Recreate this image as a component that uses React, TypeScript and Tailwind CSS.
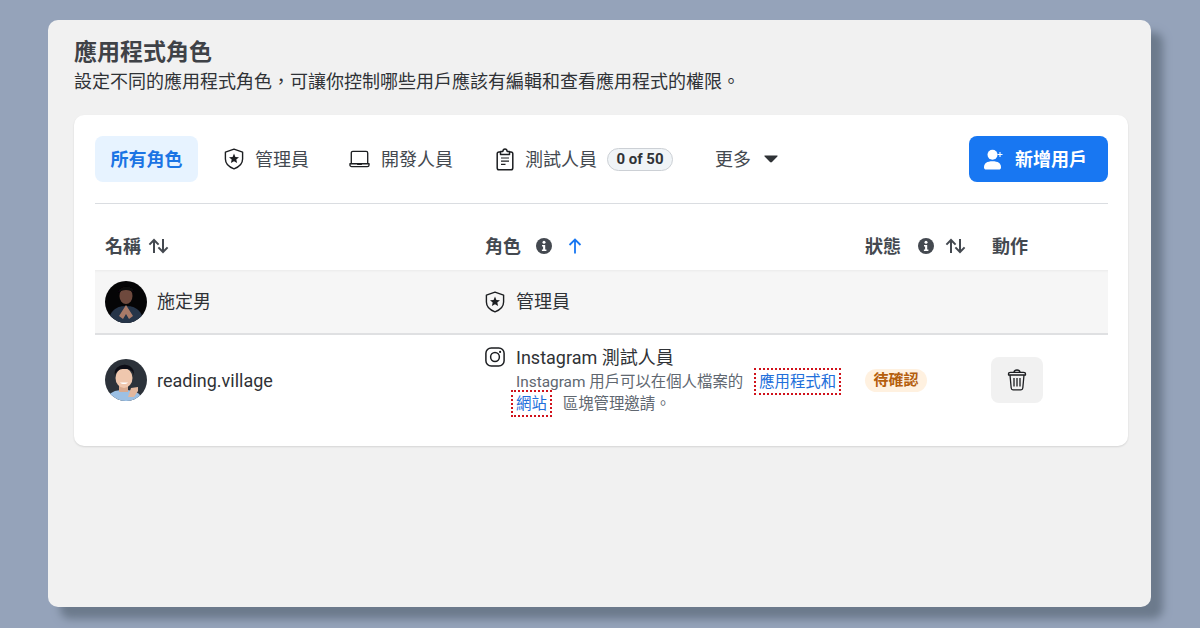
import React from "react";

const ShieldStar = () => (
  <svg width="20" height="22" viewBox="0 0 20 22" fill="none">
    <path d="M10 1.2 L18.6 4.1 V11 C18.6 15.8 14.8 19.1 10 20.8 C5.2 19.1 1.4 15.8 1.4 11 V4.1 Z" stroke="#1c1e21" strokeWidth="1.4" strokeLinejoin="round" />
    <path d="M10 5.6 L11.4 9 L15 9.3 L12.3 11.6 L13.1 15.1 L10 13.2 L6.9 15.1 L7.7 11.6 L5 9.3 L8.6 9 Z" fill="#1c1e21" />
  </svg>
);

const Laptop = () => (
  <svg width="21" height="18" viewBox="0 0 22 18" fill="none" stroke="#1c1e21" strokeWidth="1.4" strokeLinejoin="round">
    <path d="M2.4 14 V2.6 C2.4 1.7 3.1 1 4 1 H18 C18.9 1 19.6 1.7 19.6 2.6 V14" />
    <path d="M1 14 H21 V15.2 C21 16.2 20.2 17 19.2 17 H2.8 C1.8 17 1 16.2 1 15.2 Z" />
    <path d="M8.5 14.6 H13.5" />
  </svg>
);

const Clipboard = () => (
  <svg width="18" height="23" viewBox="0 0 18 23" fill="none" stroke="#1c1e21" strokeWidth="1.5" strokeLinejoin="round">
    <path d="M4.5 4 H3 C2 4 1.2 4.8 1.2 5.8 V20 C1.2 21 2 21.8 3 21.8 H15 C16 21.8 16.8 21 16.8 20 V5.8 C16.8 4.8 16 4 15 4 H13.5" />
    <path d="M4.5 6.5 V3.5 H6.8 C7 2 7.9 1.1 9 1.1 C10.1 1.1 11 2 11.2 3.5 H13.5 V6.5 Z" />
    <path d="M5 10 H13 M5 13.2 H13 M5 16.4 H9.5" strokeWidth="1.2" />
  </svg>
);

const SortBoth = () => (
  <svg width="21" height="16" viewBox="0 0 21 16" fill="none" stroke="#444950" strokeWidth="2">
    <path d="M6 15 V2 M1.4 6.6 L6 2 L10.6 6.6" />
    <path d="M15 1 V14 M10.4 9.4 L15 14 L19.6 9.4" />
  </svg>
);

const ArrowUp = () => (
  <svg width="14" height="16" viewBox="0 0 14 16" fill="none" stroke="#1877f2" strokeWidth="1.8">
    <path d="M7 15.5 V1.5 M1.5 7 L7 1.5 L12.5 7" />
  </svg>
);

const InfoDot = () => (
  <svg width="16" height="16" viewBox="0 0 16 16">
    <circle cx="8" cy="8" r="8" fill="#444950" />
    <circle cx="8" cy="4.2" r="1.5" fill="#fff" />
    <path d="M6 7 H9.2 V11.4 H10.4 V13 H5.9 V11.4 H7.1 V8.6 H6 Z" fill="#fff" />
  </svg>
);

const Instagram = () => (
  <svg width="20" height="20" viewBox="0 0 20 20" fill="none" stroke="#1c1e21" strokeWidth="1.5">
    <rect x="0.9" y="0.9" width="18.2" height="18.2" rx="5.4" />
    <circle cx="10" cy="10" r="4.4" />
    <circle cx="15.1" cy="4.9" r="1.1" fill="#1c1e21" stroke="none" />
  </svg>
);

const Trash = () => (
  <svg width="20" height="22" viewBox="0 0 20 22" fill="none" stroke="#1c1e21" strokeWidth="1.3" strokeLinejoin="round">
    <path d="M1.5 5 C1.5 3.8 2.4 3.3 3.5 3.3 H16.5 C17.6 3.3 18.5 3.8 18.5 5 V6 H1.5 Z" />
    <path d="M7 3.2 C7.2 1.8 8 1 10 1 C12 1 12.8 1.8 13 3.2" />
    <path d="M3 6 L4.2 19 C4.3 20.2 5 20.8 6 20.8 H14 C15 20.8 15.7 20.2 15.8 19 L17 6" />
    <path d="M7 9 V17.5 M10 9 V17.5 M13 9 V17.5" />
  </svg>
);

const AddUser = () => (
  <svg width="20" height="21" viewBox="0 0 20 21" fill="#fff">
    <circle cx="8.5" cy="5.8" r="5" />
    <path d="M0 18.2 C0 14.2 3 12.2 8.5 12.2 C14 12.2 17 14.2 17 18.2 C17 19.7 16.2 20.5 14.8 20.5 H2.2 C0.8 20.5 0 19.7 0 18.2 Z" />
    <path d="M16 3 V8 M13.5 5.5 H18.5" stroke="#fff" strokeWidth="1.1" fill="none" />
  </svg>
);

// small blurred stand-ins for the two profile photos
const AvatarDark = () => (
  <svg width="42" height="42" viewBox="0 0 42 42" className="rounded-full shrink-0">
    <defs>
      <filter id="soft-a"><feGaussianBlur stdDeviation="0.6" /></filter>
    </defs>
    <rect width="42" height="42" fill="#050506" />
    <g filter="url(#soft-a)">
      <path d="M3 42 C5 28 13 25 21 25 C29 25 37 28 39 42 Z" fill="#25344a" />
      <ellipse cx="21" cy="15" rx="6.5" ry="8" fill="#6e4a3e" />
      <path d="M13 12 C13 4 29 3 29 12 C25 8 17 8 13 12 Z" fill="#0a0809" />
      <path d="M21 24 L14 35 L18 38 L21 33 L24 38 L28 35 Z" fill="#a87a68" />
    </g>
  </svg>
);

const AvatarLight = () => (
  <svg width="42" height="42" viewBox="0 0 42 42" className="rounded-full shrink-0">
    <defs>
      <filter id="soft-b"><feGaussianBlur stdDeviation="0.7" /></filter>
    </defs>
    <rect width="42" height="42" fill="#2c323a" />
    <g filter="url(#soft-b)">
      <path d="M2 42 C3 33 10 31 19 31 C28 31 36 33 38 42 Z" fill="#9cc0e4" />
      <rect x="14" y="25" width="9" height="8" fill="#d8aa90" />
      <ellipse cx="19" cy="19" rx="8.5" ry="10" fill="#efc7ae" />
      <path d="M10 16 C7 4 30 1 29 16 C27 10 23 10 19 10 C15 10 12 11 10 16 Z" fill="#101116" />
      <path d="M15 23.5 C17 25.5 21 25.5 23 23.5 Z" fill="#fff" />
      <path d="M23 38 L26 29 L33 28 L33 32 L29 38 Z" fill="#e3b79d" />
    </g>
  </svg>
);

const Tab = ({ icon, label }: { icon: React.ReactNode; label: string }) => (
  <div className="flex items-center gap-[11px] text-[#444950]">
    {icon}
    <span>{label}</span>
  </div>
);

export default function App() {
  return (
    <div className="w-[1200px] h-[628px] overflow-hidden bg-[#95a3ba] pt-5 pl-12 font-['Roboto','Noto_Sans_CJK_TC',sans-serif] text-[18px] text-[#444950]">
      <div className="w-[1103px] h-[587px] rounded-[10px] bg-[#f1f1f1] px-[26px] pt-[18px] shadow-[12px_12px_8px_#6c7a8c]">
        <h1 className="text-[23px] leading-[30px] font-bold text-[#3f4247]">應用程式角色</h1>
        <p className="text-[18px] leading-[28px] text-[#2f3236]">設定不同的應用程式角色，可讓你控制哪些用戶應該有編輯和查看應用程式的權限。</p>

        <div className="mt-[19px] w-[1054px] h-[331px] rounded-[10px] bg-white pl-[21px] pr-[20px] pt-[21px] shadow-[0_1px_2px_rgba(0,0,0,0.12)]">
          <div className="flex items-center h-[46px]">
            <div className="flex items-center h-[46px] w-[103px] justify-center rounded-lg bg-[#e7f3ff] text-[#1b74e4] font-bold">所有角色</div>
            <div className="ml-[26px]"><Tab icon={<ShieldStar />} label="管理員" /></div>
            <div className="ml-[40px]"><Tab icon={<Laptop />} label="開發人員" /></div>
            <div className="ml-[43px] flex items-center">
              <Tab icon={<Clipboard />} label="測試人員" />
              <span className="ml-[10px] h-[23px] w-[66px] flex items-center justify-center rounded-full border border-[#ccd0d5] bg-[#f0f4f7] text-[15px] font-bold text-[#2f3236]">0 of 50</span>
            </div>
            <div className="ml-[42px] flex items-center gap-[13px]">
              <span>更多</span>
              <svg width="14" height="8" viewBox="0 0 14 8"><path d="M1 0.5 H13 C13.6 0.5 13.8 1.1 13.4 1.5 L8 7 C7.4 7.6 6.6 7.6 6 7 L0.6 1.5 C0.2 1.1 0.4 0.5 1 0.5 Z" fill="#2f3236" /></svg>
            </div>
            <button className="ml-auto flex h-[46px] w-[139px] items-center gap-[11px] rounded-lg bg-[#1877f2] pl-[15px] font-bold text-white">
              <AddUser />
              <span>新增用戶</span>
            </button>
          </div>

          <div className="mt-[21px] border-t border-[#dadde1]" />

          <div className="grid h-[66px] grid-cols-[380px_380px_127px_1fr] items-center pt-[18px] font-bold text-[#444950]">
            <div className="flex items-center gap-[7px] pl-[10px]">名稱 <SortBoth /></div>
            <div className="flex items-center gap-[15px] pl-[10px]">角色 <InfoDot /><span className="ml-[1px]"><ArrowUp /></span></div>
            <div className="flex items-center pl-[10px]">狀態<span className="ml-[17px]"><InfoDot /></span><span className="ml-[11px]"><SortBoth /></span></div>
            <div className="pl-[10px]">動作</div>
          </div>

          <div className="grid h-[65px] grid-cols-[380px_380px_127px_1fr] items-center border-b-2 border-[#dfe0e2] bg-[#f6f6f6] shadow-[inset_0_3px_3px_-2px_rgba(0,0,0,0.05)]">
            <div className="flex items-center gap-[10px] pl-[10px] text-[#2f3236]"><AvatarDark /><span>施定男</span></div>
            <div className="flex items-center gap-[11px] pl-[10px] text-[#2f3236]"><ShieldStar /><span>管理員</span></div>
          </div>

          <div className="grid h-[90px] grid-cols-[380px_380px_127px_1fr] pt-[11px]">
            <div className="flex h-[68px] items-center gap-[10px] pl-[10px] text-[#2f3236]"><AvatarLight /><span>reading.village</span></div>
            <div className="flex items-start gap-[11px] pl-[10px]">
              <div className="pt-[1px]"><Instagram /></div>
              <div className="w-[340px]">
                <div className="text-[18px] leading-[23px] text-[#2f3236]">Instagram 測試人員</div>
                <p className="-ml-[5px] pt-[2px] text-[15.4px] leading-[22px] text-[#606770]">
                  <span className="ml-[5px]">Instagram 用戶可以在個人檔案的</span>
                  <a className="ml-[11px] border-2 border-dotted border-[#d0121b] px-[3px] pt-[3px] pb-[2px] text-[#216fdb]">應用程式和</a>
                  <br />
                  <a className="border-2 border-dotted border-[#d0121b] px-[3px] pt-[3px] pb-[2px] text-[#216fdb]">網站</a>
                  <span className="ml-[11px]">區塊管理邀請。</span>
                </p>
              </div>
            </div>
            <div className="flex h-[68px] items-center pl-[10px]">
              <span className="flex h-[23px] w-[62px] items-center justify-center rounded-full bg-[#fff1e0] text-[15px] font-bold text-[#b55f0e]">待確認</span>
            </div>
            <div className="flex h-[68px] items-center pl-[9px]">
              <button className="flex h-[46px] w-[52px] items-center justify-center rounded-lg bg-[#f1f1f1]"><Trash /></button>
            </div>
          </div>
        </div>
      </div>
    </div>
  );
}
